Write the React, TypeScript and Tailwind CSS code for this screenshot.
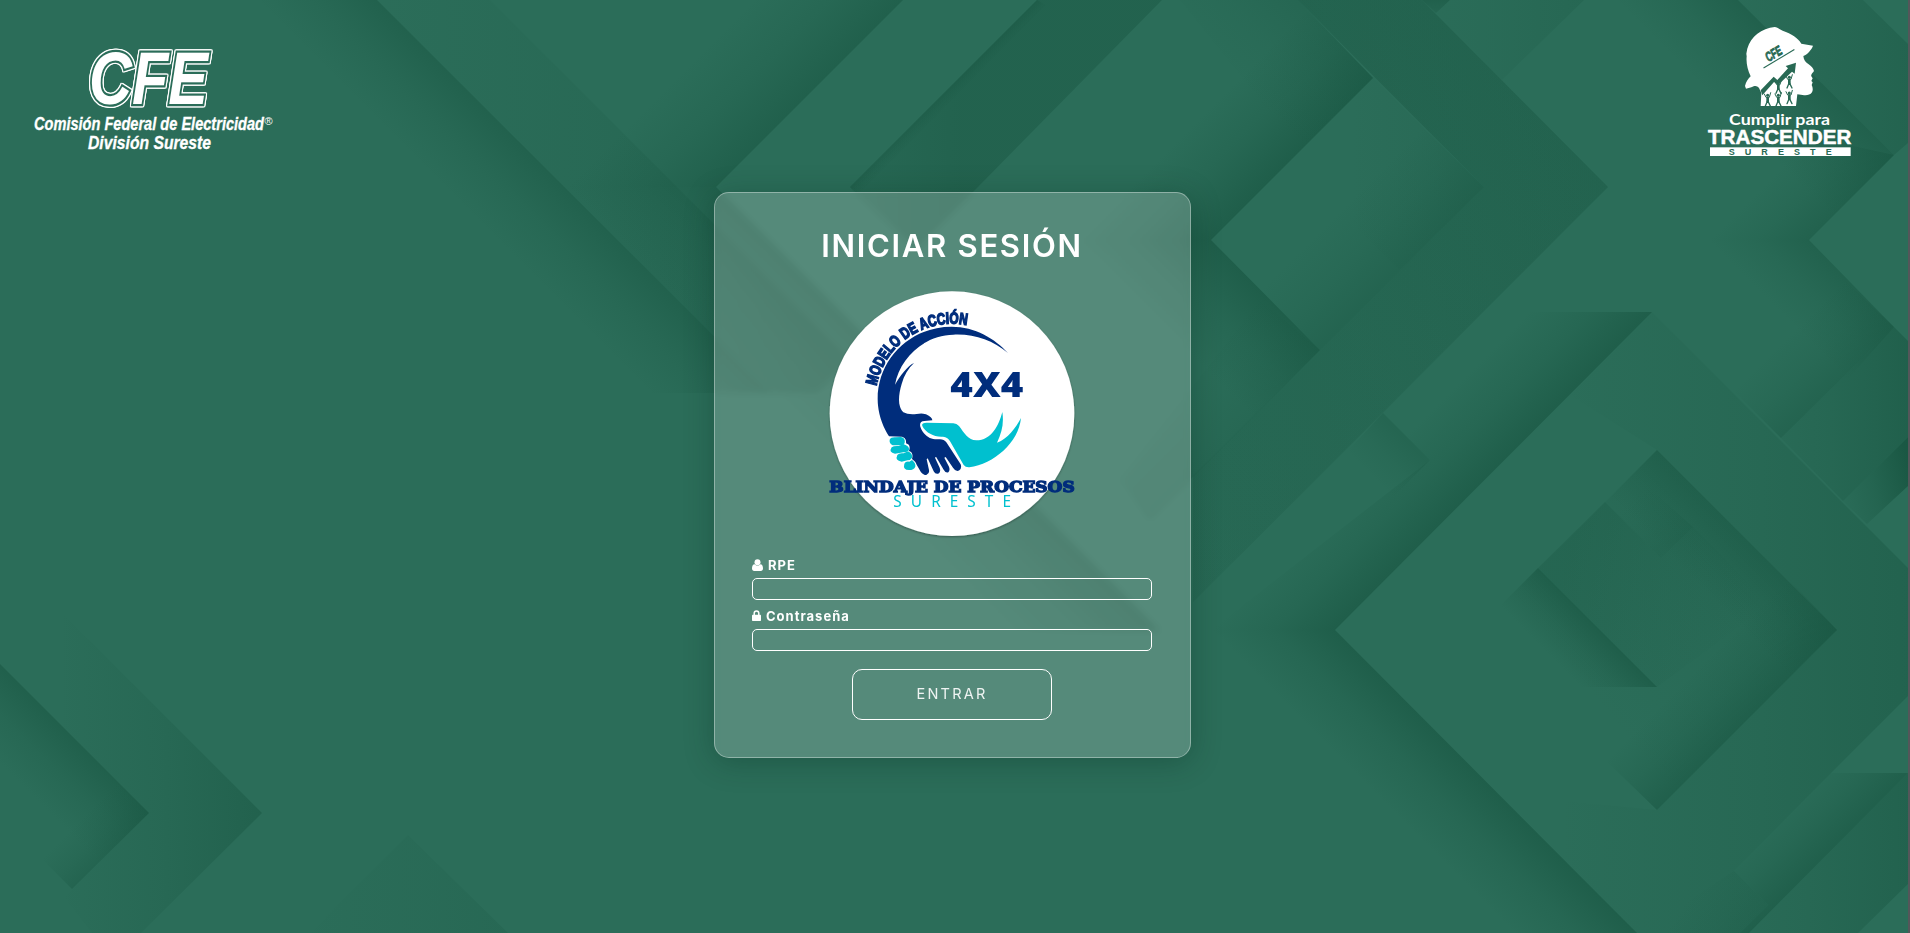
import React from "react";

type Pt = [number, number];
type Shade = { pts: string; from: Pt; to: Pt; o: number };

const DARK = "#175440";

// Each facet fades from `from` (strongest) to `to` (transparent).
const facets: Shade[] = [
  // upper-left diagonal
  { pts: "377,0 771,393 620,393 227,0", from: [560, 183], to: [500, 243], o: 0.46 },
  { pts: "377,0 490,0 850,360 817,393 771,393", from: [820, 200], to: [380, 200], o: 0.36 },
  // edges around the vertex above the card
  { pts: "903,0 716,187 566,187 753,0", from: [810, 94], to: [735, 19], o: 0.52 },
  { pts: "716,187 1160,631 1010,631 566,187", from: [900, 371], to: [825, 446], o: 0.48 },
  { pts: "1037,0 850,187 857,196 1046,5", from: [943, 94], to: [952, 103], o: 0.35 },
  { pts: "1037,0 850,187 916,250 1162,0", from: [960, 100], to: [700, 100], o: 0.42 },
  // left of the top diamond
  { pts: "1298,0 1373,78 1211,240 1077,240 1220,0", from: [1292, 159], to: [1225, 92], o: 0.6 },
  { pts: "1298,0 1373,78 1300,150 1180,0", from: [1345, 50], to: [1275, 120], o: 0.25 },
  { pts: "1211,240 1320,350 1150,520 1077,240", from: [1265, 295], to: [1198, 362], o: 0.6 },
  { pts: "1320,350 1150,520 1120,480 1260,300", from: [1300, 370], to: [1240, 310], o: 0.2 },
  // top diamond
  { pts: "1373,78 1484,187 1320,350 1211,240", from: [1400, 270], to: [1340, 210], o: 0.36 },
  { pts: "1373,78 1484,187 1400,270 1290,161", from: [1484, 187], to: [1350, 187], o: 0.2 },
  // wide band
  { pts: "1298,0 1422,0 1608,187 1193,602 1193,476 1484,187", from: [1608, 187], to: [1130, 500], o: 0.36 },
  { pts: "1298,0 1422,0 1608,187 1383,413 1193,602 1193,476 1484,187", from: [1300, 300], to: [1900, 300], o: 0.18 },
  { pts: "1422,0 1450,0 1436,13", from: [1436, 0], to: [1436, 40], o: 0.5 },
  { pts: "1450,0 1584,0 1502,80 1436,13", from: [1580, 40], to: [1400, 40], o: 0.22 },
  // upper-right bands
  { pts: "1738,0 1894,155 1824,225 1600,0", from: [1816, 78], to: [1755, 139], o: 0.5 },
  { pts: "1738,0 1863,0 1908,44 1908,143 1894,155", from: [1908, 90], to: [1700, 90], o: 0.38 },
  { pts: "1894,155 1809,240 1700,240 1785,131", from: [1852, 197], to: [1802, 147], o: 0.45 },
  { pts: "1809,240 1894,327 1838,390 1700,240", from: [1852, 284], to: [1802, 334], o: 0.45 },
  { pts: "1894,327 1781,438 1700,357 1810,247", from: [1838, 382], to: [1790, 334], o: 0.38 },
  { pts: "1894,327 1908,341 1908,437 1843,501 1781,438", from: [1930, 390], to: [1730, 390], o: 0.6 },
  { pts: "1908,437 1908,486 1867,524 1843,501", from: [1908, 460], to: [1830, 480], o: 0.85 },
  // outer frame of the large diamond
  { pts: "1652,312 1335,630 1211,630 1430,460 1383,413 1484,312", from: [1494, 471], to: [1432, 409], o: 0.6 },
  { pts: "1383,413 1430,460 1370,520 1334,466", from: [1395, 430], to: [1360, 465], o: 0.3 },
  { pts: "1335,630 1637,933 1480,933 1211,630", from: [1486, 781], to: [1424, 843], o: 0.6 },
  { pts: "1652,312 1908,568 1908,696 1831,773 1734,871 1768,905 1740,933 1637,933 1500,795 1657,810 1837,630 1657,450 1570,395", from: [1940, 600], to: [1560, 600], o: 0.46 },
  // opening inside the large diamond
  { pts: "1657,450 1837,630 1657,810 1540,695 1504,604", from: [1760, 500], to: [1560, 660], o: 0.28 },
  { pts: "1657,450 1837,630 1785,680 1605,502", from: [1747, 540], to: [1700, 587], o: 0.4 },
  { pts: "1837,630 1657,810 1562,718 1780,570", from: [1747, 720], to: [1697, 670], o: 0.52 },
  { pts: "1538,568 1605,502 1661,558 1693,527 1770,604 1657,687", from: [1560, 570], to: [1750, 640], o: 0.26 },
  { pts: "1605,502 1661,558 1693,527 1640,480", from: [1665, 550], to: [1625, 505], o: 0.2 },
  { pts: "1538,568 1657,687 1568,687 1500,606", from: [1598, 628], to: [1560, 666], o: 0.58 },
  // lower-right corner
  { pts: "1831,773 1908,773 1749,933 1740,933 1768,905 1734,871", from: [1830, 853], to: [1780, 803], o: 0.55 },
  { pts: "1768,905 1734,871 1640,933 1740,933", from: [1768, 925], to: [1700, 880], o: 0.3 },
  { pts: "1908,773 1908,884 1858,933 1749,933", from: [1930, 850], to: [1680, 850], o: 0.48 },
  // lower-left arrow
  { pts: "0,664 149,813 72,889 0,817", from: [75, 739], to: [25, 789], o: 0.52 },
  { pts: "149,813 72,889 28,845 105,769", from: [111, 851], to: [80, 820], o: 0.36 },
  { pts: "64,615 262,813 141,933 92,933 64,897 72,889 149,813 64,728", from: [262, 780], to: [60, 780], o: 0.46 },
  { pts: "408,835 508,933 310,933", from: [560, 890], to: [290, 890], o: 0.25 },
];

function Backdrop() {
  return (
    <svg className="absolute inset-0 h-full w-full" viewBox="0 0 1910 933" preserveAspectRatio="none" aria-hidden="true">
      <defs>
        {facets.map((f, i) => (
          <linearGradient key={i} id={`f${i}`} gradientUnits="userSpaceOnUse" x1={f.from[0]} y1={f.from[1]} x2={f.to[0]} y2={f.to[1]}>
            <stop offset="0" stopColor={DARK} stopOpacity={f.o} />
            <stop offset="0.5" stopColor={DARK} stopOpacity={f.o * 0.4} />
            <stop offset="1" stopColor={DARK} stopOpacity="0" />
          </linearGradient>
        ))}
      </defs>
      <rect width="1910" height="933" fill="#2b6d59" />
      {facets.map((f, i) => (
        <polygon key={i} points={f.pts} fill={`url(#f${i})`} />
      ))}
      <rect x="1908" width="2" height="933" fill="#55565a" />
    </svg>
  );
}

const sans = "'Liberation Sans', sans-serif";

function CfeLogo() {
  return (
    <svg width="290" height="160" viewBox="0 0 290 160" fill="#fff" role="img" aria-label="CFE">
      <g className="[filter:drop-shadow(1px_0_0_#fff)_drop-shadow(-1px_0_0_#fff)_drop-shadow(0_1px_0_#fff)_drop-shadow(0_-1px_0_#fff)]">
        <text
          x="89"
          y="103.5"
          fontSize="74"
          fontWeight="700"
          fontStyle="italic"
          fontFamily={sans}
          textLength="119"
          lengthAdjust="spacingAndGlyphs"
          stroke="#2b6d59"
          strokeWidth="4.500"
          paintOrder="stroke"
        >
          CFE
        </text>
      </g>
      <text x="34" y="129.5" fontFamily={sans} fontStyle="italic" fontWeight="700" fontSize="17.5" stroke="#fff" strokeWidth="0.3" textLength="230" lengthAdjust="spacingAndGlyphs">
        Comisión Federal de Electricidad
      </text>
      <text x="264.500" y="125" fontFamily={sans} fontSize="11">®</text>
      <text x="88" y="148.5" fontFamily={sans} fontStyle="italic" fontWeight="700" fontSize="17.5" stroke="#fff" strokeWidth="0.3" textLength="123" lengthAdjust="spacingAndGlyphs">
        División Sureste
      </text>
    </svg>
  );
}

function Person({ x, y }: { x: number; y: number }) {
  return (
    <g transform={`translate(${x} ${y})`} stroke="#286954" fill="none" strokeLinecap="round">
      <circle r="4.5" fill="#286954" stroke="none" />
      <path d="M-10-4 L-5 6 L5 6 L9-8" strokeWidth="3" />
      <path d="M0 8 V18" strokeWidth="8" />
      <path d="M-1 18 L-7 32 M1 18 L8 32" strokeWidth="4" />
    </g>
  );
}

function TrascenderLogo() {
  return (
    <svg width="180" height="150" viewBox="0 0 540 450" fill="#fff" role="img" aria-label="Cumplir para Trascender">
      <path d="M254 36 C262 37 270 44 278 47 C305 57 324 68 334 86 L369 92 C365 103 354 117 340 123 C341 135 347 142 356 148 C364 154 370 160 372 168 C368 174 362 178 364 184 L368 190 L364 198 L368 202 L365 210 C368 217 370 223 366 232 C360 242 346 241 338 240 L322 238 L318 273 L212 273 L214 234 L207 219 C200 212 196 211 184 217 L168 221 L165 213 C168 201 174 192 182 184 C173 164 168 145 170 124 L169 116 C174 74 202 48 240 38 Z" />
      <path d="M212 226 L251 185 L262 195 L294 160 L287 153 L318 143 L314 176 L306 170 L264 210 L252 201 L217 241 Z" fill="#286954" />
      <Person x={233} y={241} />
      <Person x={265} y={241} />
      <Person x={298} y={234} />
      <Person x={265} y={203} />
      <Person x={298} y={187} />
      <g transform="rotate(-31 250 115)" fill="#286954">
        <text x="224" y="130" fontFamily={sans} fontWeight="700" fontStyle="italic" fontSize="40" stroke="#286954" strokeWidth="2.500" textLength="52" lengthAdjust="spacingAndGlyphs">CFE</text>
        <rect x="202" y="136" width="108" height="3.5" />
      </g>
      <text x="117" y="330" fontFamily="Lato, sans-serif" fontWeight="700" fontSize="47" textLength="303" lengthAdjust="spacingAndGlyphs">Cumplir para</text>
      <text x="54" y="388" fontFamily={sans} fontWeight="700" fontSize="60" stroke="#fff" strokeWidth="1.5" textLength="430" lengthAdjust="spacingAndGlyphs">TRASCENDER</text>
      <rect x="60" y="397" width="422" height="26" />
      <text x="116" y="420" fontFamily={sans} fontWeight="700" fontSize="27" fill="#286954" textLength="309" lengthAdjust="spacing">SURESTE</text>
    </svg>
  );
}

function Emblem() {
  const navy = "#002d7c";
  const cyan = "#00c0cf";
  return (
    <svg className="block h-[246px] w-[246px] overflow-visible" viewBox="57 33 738 738" role="img" aria-label="Blindaje de procesos">
      <defs>
        <path id="arc" d="M199 318 A231 231 0 0 1 478 137" />
        <filter id="soft" x="-5%" y="-5%" width="110%" height="110%">
          <feDropShadow dx="0" dy="3" stdDeviation="3" floodColor="#000" floodOpacity="0.35" />
        </filter>
      </defs>
      <circle cx="426" cy="401" r="367" fill="#fff" filter="url(#soft)" />
      <text fontFamily={sans} fontWeight="700" fontSize="48" fill={navy} stroke={navy} strokeWidth="4.500">
        <textPath href="#arc" textLength="364" lengthAdjust="spacingAndGlyphs">MODELO DE ACCIÓN</textPath>
      </text>
      <path
        fill={navy}
        d="M594 219 C555 176 495 140 425 140 C302 140 203 236 203 357 C203 402 219 441 237 469 L276 470 C288 473 289 483 288 490 C299 493 301 501 297 513 C308 515 309 527 306 537 C316 544 318 549 320 554 L333 577 Q341 587 350 584 Q359 581 357 570 L350 538 L353 535 L371 574 Q377 585 387 580 Q393 574 389 563 L375 533 L378 530 L401 569 Q407 580 415 577 Q421 571 417 560 L403 533 L407 531 L429 563 Q438 577 448 571 Q456 565 452 553 L409 487 Q402 478 390 478 L375 478 C355 476 338 461 331 440 Q327 424 343 423 L367 421 Q367 412 348 403 Q338 399 320 402 Q295 405 280 397 C262 379 265 346 275 312 C282 286 295 265 312 249 C293 257 271 287 255 314 C269 234 345 164 430 164 C493 161 547 180 594 219 Z"
      />
      <path
        fill={cyan}
        d="M336 434 Q338 428 350 428 L430 430 Q440 430 447 438 C463 459 474 480 499 481 C544 481 566 437 577 396 C582 430 576 457 561 488 C594 477 617 443 633 414 C626 488 551 552 478 562 Q467 563 461 555 L421 485 Q414 472 399 470 C369 472 342 455 336 434 Z"
      />
      <g fill={cyan}>
        <path d="M239 479 Q243 471 257 472 L273 471 Q287 475 284 488 Q282 496 269 496 L248 496 Q237 490 239 479 Z" />
        <path d="M245 502 Q251 497 266 498 L280 492 Q299 499 297 509 Q295 516 280 517 L255 521 Q235 518 245 502 Z" />
        <path d="M262 525 Q267 518 281 520 L294 514 Q308 520 306 533 Q302 541 292 541 L275 545 Q254 542 262 525 Z" />
        <path d="M283 551 Q287 543 298 545 L306 540 Q318 550 316 560 Q312 570 297 570 Q278 570 283 551 Z" />
      </g>
      <text x="421" y="352" fontFamily="'Open Sans', sans-serif" fontWeight="800" fontSize="106" fill={navy} textLength="219" lengthAdjust="spacingAndGlyphs">4X4</text>
      <text x="58" y="636" fontFamily="'DejaVu Serif', serif" fontWeight="700" fontSize="46" fill={navy} stroke={navy} strokeWidth="4" textLength="736" lengthAdjust="spacingAndGlyphs">BLINDAJE DE PROCESOS</text>
      <text x="250" y="681" fontFamily="'Noto Sans', sans-serif" fontSize="46" fill={cyan} textLength="353" lengthAdjust="spacing">SURESTE</text>
    </svg>
  );
}

function UserIcon() {
  return (
    <svg className="h-3 w-[11px]" viewBox="0 0 11 12" fill="currentColor" aria-hidden="true">
      <circle cx="5.5" cy="3.2" r="3" />
      <path d="M2.7 5.2 C.7 5.2 0 7.200 0 9.500 C0 11 .9 12 2.200 12 H8.800 C10.100 12 11 11 11 9.500 C11 7.200 10.300 5.200 8.300 5.200 C7.500 6.100 6.600 6.500 5.500 6.500 C4.400 6.500 3.500 6.100 2.700 5.200 Z" />
    </svg>
  );
}

function LockIcon() {
  return (
    <svg className="mb-0.5 h-[11px] w-[9px]" viewBox="0 0 9 11" aria-hidden="true">
      <path d="M2.200 5.500 V3.300 a2.300 2.300 0 0 1 4.600 0 V5.500" fill="none" stroke="currentColor" strokeWidth="1.500" />
      <rect y="4.800" width="9" height="6.200" rx="0.700" fill="currentColor" />
    </svg>
  );
}

function Field({ id, label, type, icon }: { id: string; label: string; type: string; icon: React.ReactNode }) {
  return (
    <div className="flex h-[51px] flex-col">
      <label htmlFor={id} className="flex h-[22px] items-center gap-[5px] pb-1 text-[13px] font-bold leading-none tracking-[1px]">
        {icon}
        <span>{label}</span>
      </label>
      <input id={id} type={type} className="h-[22px] w-full rounded-[5px] border border-white bg-transparent px-2 text-xs outline-none" />
    </div>
  );
}

export default function App() {
  return (
    <div className="relative h-[933px] w-full overflow-hidden bg-[#2b6d59] font-['Inter',sans-serif] text-white">
      <Backdrop />
      <div className="relative grid h-full grid-cols-[714px_477px_1fr] items-start">
        <CfeLogo />
        <main className="mt-48 flex h-[566px] flex-col items-center rounded-[15px] border border-white/35 bg-white/20 pr-px shadow-[0_4px_30px_rgba(0,40,25,0.3)] backdrop-blur-[3px]">
          <h1 className="mt-[34px] h-[38px] whitespace-nowrap text-[31px] font-semibold leading-[38px] tracking-[1.7px]">INICIAR SESIÓN</h1>
          <div className="mt-[26px]">
            <Emblem />
          </div>
          <form className="mt-[19px] flex w-[400px] flex-col items-center" onSubmit={(e) => e.preventDefault()}>
            <div className="w-full">
              <Field id="rpe" label="RPE" type="text" icon={<UserIcon />} />
              <Field id="pass" label="Contraseña" type="password" icon={<LockIcon />} />
            </div>
            <button type="submit" className="mt-[11px] h-[51px] w-[200px] rounded-[10px] border border-white pb-0.5 text-[14.500px] tracking-[2.200px] text-white/90">
              ENTRAR
            </button>
          </form>
        </main>
        <div className="mt-[15px] mr-10 justify-self-end">
          <TrascenderLogo />
        </div>
      </div>
    </div>
  );
}
